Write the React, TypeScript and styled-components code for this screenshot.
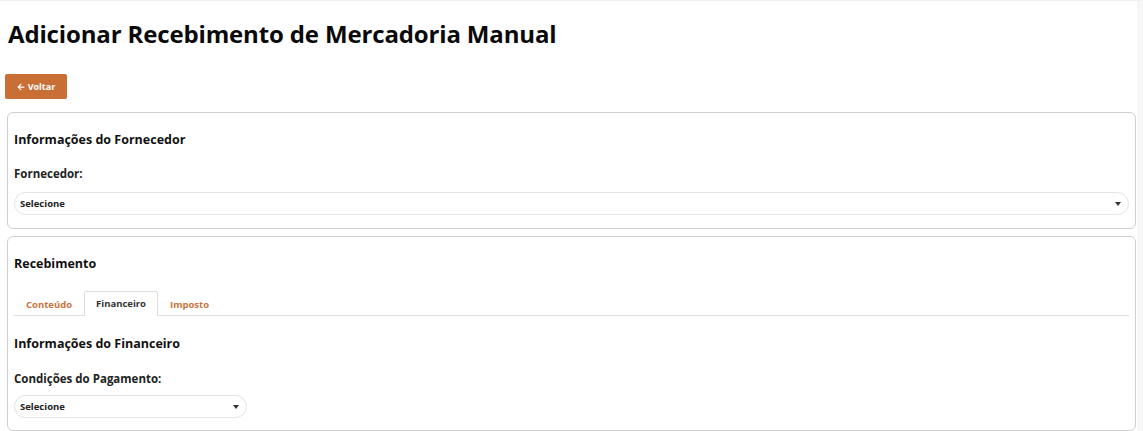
import React from "react";
import styled, { createGlobalStyle } from "styled-components";

const Global = createGlobalStyle`
  html, body { margin: 0; padding: 0; background: #fff; }
  body { font-family: "Open Sans", "DejaVu Sans", sans-serif; color: #111; }
  * { box-sizing: border-box; }
`;

const Page = styled.div`
  width: 1143px;
  height: 431px;
  border-top: 1px solid #f0f0f0;
  border-right: 6px solid #f7f7f7;
  overflow: hidden;
  display: flex;
  flex-direction: column;
`;

const Title = styled.h1`
  margin: 16px 0 0 8px;
  font-size: 24px;
  line-height: 34px;
  font-weight: 700;
  letter-spacing: -0.15px;
  color: #0a0a0a;
`;

const BackButton = styled.button`
  margin: 23px 0 0 5px;
  width: 62px;
  height: 25px;
  border: none;
  border-radius: 2px;
  background: #c96f36;
  color: #fff;
  font-family: inherit;
  font-size: 9px;
  font-weight: 700;
  display: flex;
  align-items: center;
  justify-content: center;
  gap: 3px;
  padding: 0;
  cursor: pointer;
`;

const Card = styled.section<{ $h: number; $top: number }>`
  margin: ${p => p.$top}px 0 0 7px;
  width: 1129px;
  height: ${p => p.$h}px;
  border: 1px solid #cfcfcf;
  border-radius: 6px;
  padding: 0 6px 0 6px;
  display: flex;
  flex-direction: column;
`;

const CardTitle = styled.h2<{ $top: number }>`
  margin: ${p => p.$top}px 0 0 0;
  font-size: 12.5px;
  line-height: 18px;
  font-weight: 700;
  color: #111;
`;

const Label = styled.label<{ $top: number }>`
  margin-top: ${p => p.$top}px;
  font-size: 11.5px;
  line-height: 16px;
  font-weight: 700;
  color: #222;
  display: block;
`;

const SelectBox = styled.div<{ $w?: number; $top: number }>`
  margin-top: ${p => p.$top}px;
  width: ${p => (p.$w ? `${p.$w}px` : "100%")};
  height: 23px;
  border: 1px solid #e3e3e3;
  border-radius: 12px;
  display: flex;
  align-items: center;
  justify-content: space-between;
  padding: 0 6px 0 5px;
  font-size: 9.5px;
  font-weight: 700;
  color: #222;
`;

const Caret = styled.span`
  width: 0;
  height: 0;
  border-left: 3px solid transparent;
  border-right: 3px solid transparent;
  border-top: 4px solid #333;
  margin-right: 1px;
`;

const TabBar = styled.div`
  margin-top: 18px;
  display: flex;
  border-bottom: 1px solid #dddddd;
  height: 25px;
`;

const Tab = styled.div<{ $active?: boolean }>`
  height: 25px;
  padding: 0 11px;
  display: flex;
  align-items: center;
  font-size: 9.5px;
  font-weight: 700;
  color: ${p => (p.$active ? "#333" : "#c8753d")};
  border: 1px solid ${p => (p.$active ? "#dddddd" : "transparent")};
  border-bottom: ${p => (p.$active ? "1px solid #fff" : "none")};
  border-radius: 3px 3px 0 0;
  background: ${p => (p.$active ? "#fff" : "transparent")};
  margin-bottom: -1px;
`;

const ArrowIcon = () => (
  <svg width="8" height="8" viewBox="0 0 448 512" fill="#fff">
    <path d="M257.5 445.1l-22.2 22.2c-9.4 9.4-24.6 9.4-33.9 0L7 273c-9.4-9.4-9.4-24.6 0-33.9L201.4 44.7c9.4-9.4 24.6-9.4 33.9 0l22.2 22.2c9.5 9.5 9.3 25-.4 34.3L136.6 216H424c13.3 0 24 10.7 24 24v32c0 13.3-10.7 24-24 24H136.6l120.5 114.8c9.8 9.3 10 24.8.4 34.3z" />
  </svg>
);

export default function App() {
  return (
    <>
      <Global />
      <Page>
        <Title>Adicionar Recebimento de Mercadoria Manual</Title>
        <div>
          <BackButton>
            <ArrowIcon />
            Voltar
          </BackButton>
        </div>
        <Card $h={117} $top={13}>
          <CardTitle $top={18}>Informações do Fornecedor</CardTitle>
          <Label $top={17}>Fornecedor:</Label>
          <SelectBox $top={10}>
            <span>Selecione</span>
            <Caret />
          </SelectBox>
        </Card>
        <Card $h={195} $top={7}>
          <CardTitle $top={18}>Recebimento</CardTitle>
          <TabBar>
            <Tab>Conteúdo</Tab>
            <Tab $active>Financeiro</Tab>
            <Tab>Imposto</Tab>
          </TabBar>
          <CardTitle $top={19}>Informações do Financeiro</CardTitle>
          <Label $top={18}>Condições do Pagamento:</Label>
          <SelectBox $top={8} $w={233}>
            <span>Selecione</span>
            <Caret />
          </SelectBox>
        </Card>
      </Page>
    </>
  );
}
